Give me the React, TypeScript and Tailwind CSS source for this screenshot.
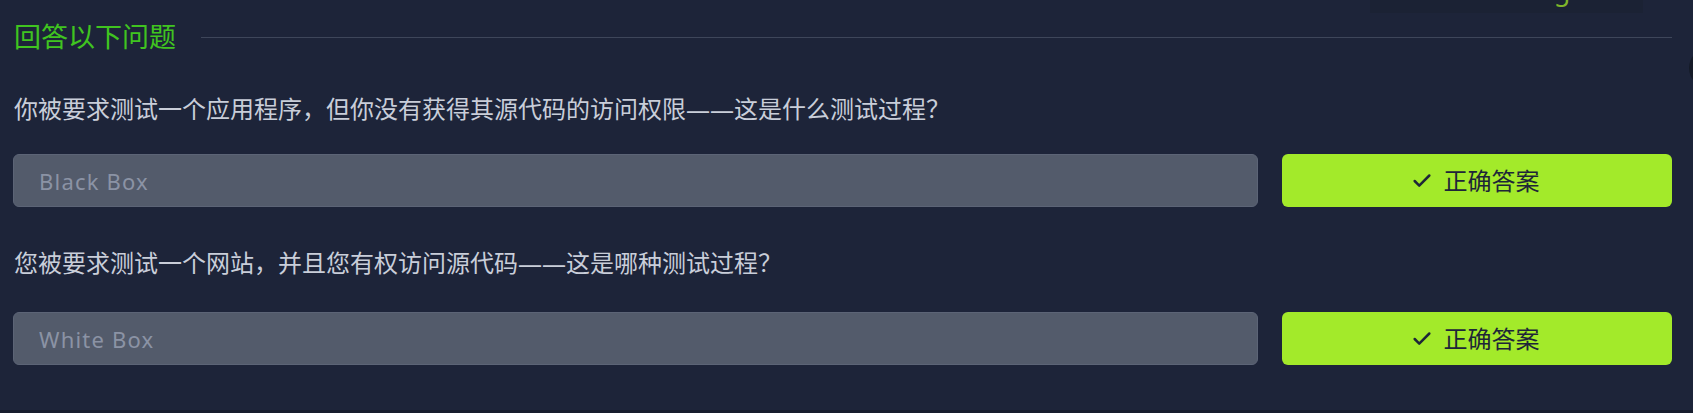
import { Check } from "lucide-react";

const questions = [
  { q: "你被要求测试一个应用程序，但你没有获得其源代码的访问权限——这是什么测试过程？", a: "Black Box", gapTop: "mt-[38px]", gapInput: "mt-[29px]" },
  { q: "您被要求测试一个网站，并且您有权访问源代码——这是哪种测试过程？", a: "White Box", gapTop: "mt-[40px]", gapInput: "mt-[33px]" },
];

const font = { fontFamily: '"Noto Sans", "Noto Sans CJK SC", sans-serif' };

export default function App() {
  return (
    <div className="relative flex h-[413px] w-full flex-col overflow-hidden bg-[#1d2439]" style={font}>
      {/* cut-off header button above */}
      <div className="absolute right-[50px] top-0 h-[13px] w-[273px] overflow-hidden bg-[#1b2234]">
        <div className="-mt-[28px] pl-[17px] text-[27px] leading-[36px] tracking-[2px] text-[#7fb52a]">View Message</div>
      </div>
      <div className="absolute right-[-36px] top-[48px] h-[40px] w-[40px] rounded-full bg-[#151a27]" />

      <div className="flex-1 pl-[14px] pr-[21px] pt-[19px]">
        <div className="flex h-[36px] items-center gap-[25px]">
          <h2 className="text-[27px] leading-[36px] text-[#40c420]">回答以下问题</h2>
          <div className="h-px flex-1 bg-[#3e465a]" />
        </div>

        {questions.map((item) => (
          <div key={item.a}>
            <p className={`${item.gapTop} text-[24px] leading-[32px] text-[#c9ced9]`}>{item.q}</p>
            <div className={`${item.gapInput} flex h-[53px] gap-[24px]`}>
              <input
                readOnly
                placeholder={item.a}
                className="-ml-px h-full flex-1 rounded-[6px] border border-[#5c6476] bg-[#535b6b] px-[25px] text-[22px] tracking-[1.2px] text-[#8b93a5] outline-none placeholder:text-[#8b93a5]"
                style={font}
              />
              <button className="flex h-full w-[390px] items-center justify-center gap-[11px] rounded-[6px] bg-[#a3ea2a] pr-[4px] text-[24px] text-[#1e2638]">
                <Check size={22} strokeWidth={2.7} />
                <span>正确答案</span>
              </button>
            </div>
          </div>
        ))}
      </div>
      <div className="h-[3px] bg-[#171d2d]" />
    </div>
  );
}
